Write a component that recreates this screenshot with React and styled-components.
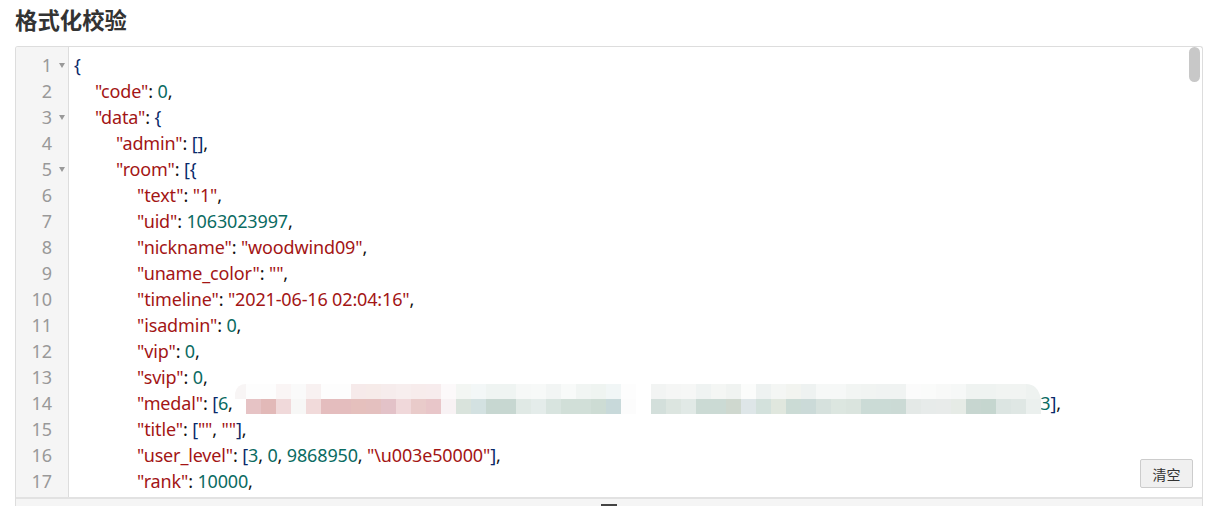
import React from "react";
import styled, { createGlobalStyle } from "styled-components";

const Global = createGlobalStyle`
  html, body { margin: 0; padding: 0; background: #fff; overflow: hidden; height: 506px; }
`;
const Page = styled.div`
  padding: 0 5px 0 15px;
  font-family: "Noto Sans", "Noto Sans CJK SC", sans-serif;
`;
const Title = styled.h2`
  margin: 0;
  height: 46px;
  font: 700 22.4px/38px "Noto Sans CJK SC", sans-serif;
  color: #333;
`;
const Editor = styled.div`
  position: relative;
  height: 462px;
  width: 1188px;
  box-sizing: border-box;
  border: 1px solid #ddd;
  border-bottom: 0;
  border-radius: 3px 3px 0 0;
  display: flex;
  flex-direction: column;
  overflow: hidden;
`;
const Body = styled.div`
  flex: 1;
  min-height: 0;
  display: flex;
  overflow: hidden;
`;
const Gutter = styled.div`
  width: 52px;
  flex: none;
  padding-top: 5px;
  background: #f5f5f5;
  border-right: 1px solid #ddd;
  color: #999;
  font-size: 18px;
  line-height: 26px;
`;
const GutterRow = styled.div`
  height: 26px;
  display: flex;
  align-items: center;
`;
const Num = styled.span`
  width: 36px;
  text-align: right;
`;
const Fold = styled.span`
  margin-left: 7px;
  width: 0;
  height: 0;
  border-left: 3px solid transparent;
  border-right: 3px solid transparent;
  border-top: 5px solid #999;
`;
const Code = styled.div`
  flex: 1;
  padding: 5px 0 0 5px;
  font-size: 18px;
  line-height: 26px;
  white-space: pre;
  letter-spacing: -0.15px;
`;
const Line = styled.div`
  height: 26px;
  padding-left: ${(p) => p.$indent * 21}px;
`;
const colors = { k: "#a31515", n: "#0b6b62", p: "#111", b: "#0a2a6a" };
const Tok = styled.span`
  color: ${(p) => colors[p.$t]};
`;
const Gap = styled.span`
  display: inline-block;
  width: ${(p) => p.$w}px;
`;
const Thumb = styled.div`
  position: absolute;
  top: 0;
  right: 2px;
  width: 11px;
  height: 35px;
  border-radius: 6px;
  background: #c8c8c8;
`;
const ClearButton = styled.button`
  position: absolute;
  right: 9px;
  bottom: 20px;
  width: 53px;
  height: 29px;
  padding: 0;
  background: #f0f0f0;
  border: 1px solid #ccc;
  border-radius: 2px;
  color: #333;
  font: 400 14px "Noto Sans CJK SC", sans-serif;
`;
const Resizer = styled.div`
  flex: none;
  height: 9px;
  background: #f5f5f5;
  border-top: 2px solid #e2e2e2;
  position: relative;
`;
const Grip = styled.div`
  position: absolute;
  left: 585px;
  top: 5px;
  width: 16px;
  height: 2px;
  background: #444;
`;
const Mosaic = styled.svg`
  position: absolute;
  left: 219px;
  top: 336px;
`;

const L = (indent, ...toks) => ({ indent, toks });
const k = (s) => ["k", s], n = (s) => ["n", s], p = (s) => ["p", s], b = (s) => ["b", s];
const lines = [
  L(0, b("{")),
  L(1, k('"code"'), p(": "), n("0"), p(",")),
  L(1, k('"data"'), p(": "), b("{")),
  L(2, k('"admin"'), p(": "), b("[]"), p(",")),
  L(2, k('"room"'), p(": "), b("[{")),
  L(3, k('"text"'), p(": "), k('"1"'), p(",")),
  L(3, k('"uid"'), p(": "), n("1063023997"), p(",")),
  L(3, k('"nickname"'), p(": "), k('"woodwind09"'), p(",")),
  L(3, k('"uname_color"'), p(": "), k('""'), p(",")),
  L(3, k('"timeline"'), p(": "), k('"2021-06-16 02:04:16"'), p(",")),
  L(3, k('"isadmin"'), p(": "), n("0"), p(",")),
  L(3, k('"vip"'), p(": "), n("0"), p(",")),
  L(3, k('"svip"'), p(": "), n("0"), p(",")),
  L(3, k('"medal"'), p(": "), b("["), n("6"), p(", "), ["gap", 803], n("3"), b("]"), p(",")),
  L(3, k('"title"'), p(": "), b("["), k('""'), p(", "), k('""'), b("]"), p(",")),
  L(3, k('"user_level"'), p(": "), b("["), n("3"), p(", "), n("0"), p(", "), n("9868950"), p(", "), k('"\\u003e50000"'), b("]"), p(",")),
  L(3, k('"rank"'), p(": "), n("10000"), p(",")),
];
const foldable = [1, 3, 5];

const top = ["#fdfdfd","#fdfdfd","#faf5f5","#fafafa","#f8f1f1","#fdfdfd","#fdfdfd","#f6eaea","#f6ebe9","#f6ecec","#f7eeee","#f7ecec","#f7eced","#fcf9fa","#f3f6f3","#f3f7f7","#eff4f2","#eff4f2","#f6f8f7","#f7f9f8","#f2f5f4","#f8faf9","#f1f5f3","#eff4f1","#f1f6f6","#fdfdfd"];
const bottom = ["#e6c3c5","#e2b9b8","#f0d9da","#f7f7f6","#f1dada","#e4bdbe","#e4bdbe","#e5c0bd","#e4c0bf","#e3c2c8","#f0d8da","#e9cbca","#e8c6c9","#f8f2f4","#d9e3dc","#d3e1e1","#c7d7d1","#c7d7d1","#e0e9e5","#e4ecea","#d8e4df","#d1dfd8","#d1dfd8","#cddcd4","#c8d9da","#fcfcfc"];
const top2 = ["#f2f4f3","#f5f6f5","#f6f7f6","#eff3f2","#f4f6f4","#f0f3f1","#fbfcfb","#eef2f1","#f4f6f4","#f2f4f0","#eef2f1","#f6f8f7","#f6f8f7","#f2f5f3","#f1f4f2","#f0f3f2","#f0f3f2","#fbfbfb","#fafbfa","#f8f9f8","#f6f8f7","#eff3f1","#eff3f1","#f1f4f2","#f1f4f2"];
const bottom2 = ["#d3dfdb","#dce5e0","#e1e9e6","#cbdad4","#cbdad4","#cfd8cf","#dee6e8","#d3e1dc","#e0e7de","#cbdbd5","#cbdad8","#d6e1dd","#dce6e0","#dae4de","#cbdbd6","#cbdbd6","#cbdad5","#e4e9e7","#e7ebea","#e8ebea","#e6ebe6","#c7d6d0","#c5d6cf","#dce5e2","#dfe7e4","#ebf0ee"];

export default function App() {
  return (
    <Page>
      <Global />
      <Title>格式化校验</Title>
      <Editor>
        <Body>
          <Gutter>
            {lines.map((_, i) => (
              <GutterRow key={i}>
                <Num>{i + 1}</Num>
                {foldable.includes(i + 1) && <Fold />}
              </GutterRow>
            ))}
          </Gutter>
          <Code>
            {lines.map((l, i) => (
              <Line key={i} $indent={l.indent}>
                {l.toks.map(([t, s], j) =>
                  t === "gap" ? <Gap key={j} $w={s} /> : <Tok key={j} $t={t}>{s}</Tok>
                )}
              </Line>
            ))}
          </Code>
        </Body>
        <Resizer><Grip /></Resizer>
        <Thumb />
        <ClearButton>清空</ClearButton>
        <Mosaic width="808" height="32" viewBox="0 0 808 32">
          <path d="M0 10 Q2 1 11 1 V16 H0Z" fill="#f8f5f5" />
          {top.map((c, i) => <rect key={i} x={11 + i * 15} y="1" width="15" height="15" fill={c} />)}
          {bottom.map((c, i) => <rect key={"b" + i} x={11 + i * 15} y="16" width="15" height="15" fill={c} />)}
          {top2.map((c, i) => <rect key={"t" + i} x={416 + i * 15} y="1" width="15" height="15" fill={c} />)}
          <path d="M791 1 Q803 1 806 16 H791Z" fill="#eef2f0" />
          {bottom2.map((c, i) => <rect key={"c" + i} x={416 + i * 15} y="16" width="15" height="15" fill={c} />)}
        </Mosaic>
      </Editor>
    </Page>
  );
}
